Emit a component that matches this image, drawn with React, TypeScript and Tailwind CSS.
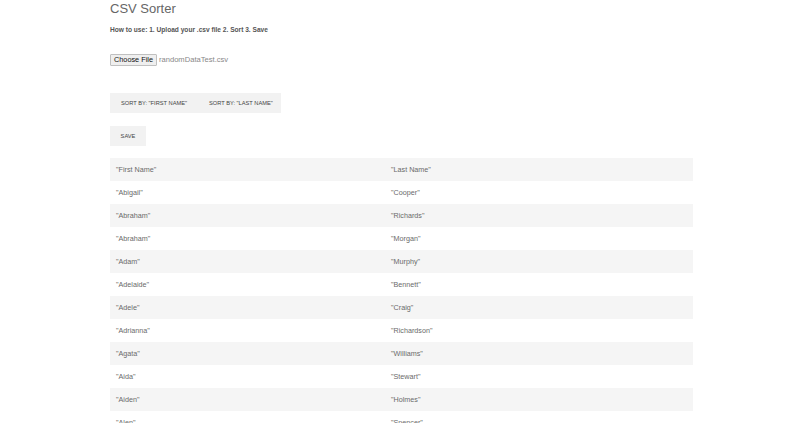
import React from "react";

const rows: [string, string][] = [
  ["Abigail", "Cooper"],
  ["Abraham", "Richards"],
  ["Abraham", "Morgan"],
  ["Adam", "Murphy"],
  ["Adelaide", "Bennett"],
  ["Adele", "Craig"],
  ["Adrianna", "Richardson"],
  ["Agata", "Williams"],
  ["Aida", "Stewart"],
  ["Aiden", "Holmes"],
  ["Alen", "Spencer"],
  ["Alexander", "Hill"],
];

export default function App() {
  return (
    <div
      className="w-[806px] h-[423px] overflow-hidden bg-white text-[#555]"
      style={{ fontFamily: '"Liberation Sans", Arial, sans-serif' }}
    >
      <div className="pl-[110px] pr-[113px]">
        <h1 className="text-[13px] leading-[15px] pt-[1px] m-0 font-normal text-[#666]">CSV Sorter</h1>
        <p className="mt-[9px] text-[6.6px] leading-[9px] font-bold text-[#555]">
          How to use: 1. Upload your .csv file 2. Sort 3. Save
        </p>
        <div className="mt-[20px] flex items-center h-[12px]">
          <span className="h-[12px] px-[3px] flex items-center border border-[#c0c0c0] rounded-[1px] bg-[#efefef] text-[7.3px] text-[#111]">
            Choose File
          </span>
          <span className="ml-[2px] text-[7.6px] text-[#888]">randomDataTest.csv</span>
        </div>
        <div className="mt-[27px] flex w-[171px] h-[20px] bg-[#f2f2f2]">
          <span className="flex items-center pl-[11px] pr-[11px] text-[5.7px] text-[#444]">SORT BY: "FIRST NAME"</span>
          <span className="flex items-center pl-[11px] text-[5.7px] text-[#444]">SORT BY: "LAST NAME"</span>
        </div>
        <div className="mt-[13px] w-[36px] h-[20px] bg-[#f2f2f2] flex items-center justify-center text-[5.7px] text-[#444]">
          SAVE
        </div>
        <table className="mt-[12px] w-[583px] border-collapse text-[7.2px] text-[#6a6a6a]">
          <tbody>
            <tr className="bg-[#f5f5f5] h-[23px]">
              <td className="w-[275px] pl-[6px] pt-[1px] align-middle">"First Name"</td>
              <td className="pl-[6px] pt-[1px] align-middle">"Last Name"</td>
            </tr>
            {rows.map(([f, l], i) => (
              <tr key={i} className={i % 2 === 1 ? "bg-[#f5f5f5] h-[23px]" : "bg-white h-[23px]"}>
                <td className="pl-[6px] pt-[1px] align-middle">"{f}"</td>
                <td className="pl-[6px] pt-[1px] align-middle">"{l}"</td>
              </tr>
            ))}
          </tbody>
        </table>
      </div>
    </div>
  );
}
